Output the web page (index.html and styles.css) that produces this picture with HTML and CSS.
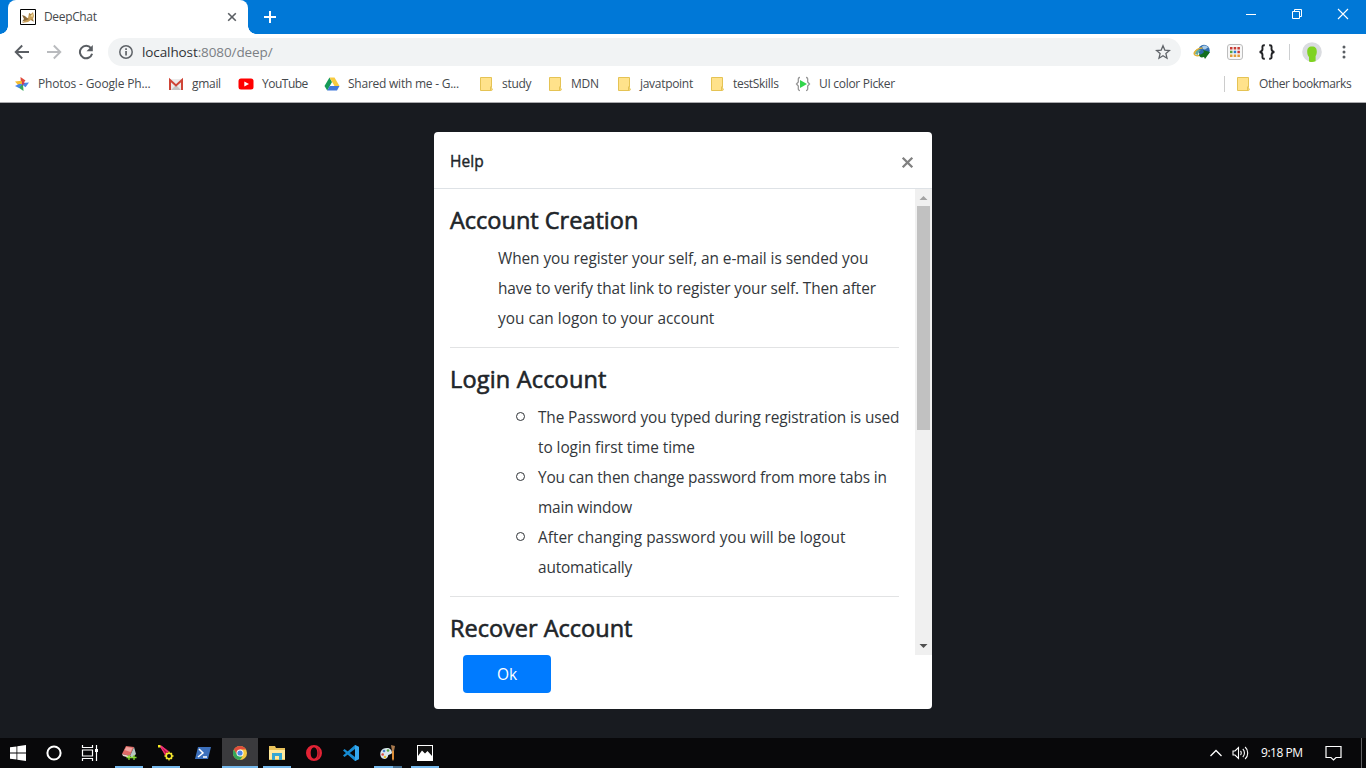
FILE: index.html
```html
<!DOCTYPE html>
<html lang="en">
<head>
<meta charset="utf-8">
<title>DeepChat</title>
<link rel="stylesheet" href="styles.css">
</head>
<body>
<div class="screen">
  <header class="tabstrip">
    <div class="tab">
      <svg class="favicon" width="16" height="16" viewBox="0 0 16 16"><path fill="#fff" stroke="#000" d="M.5.5h15v15H.5z"/><path fill="#c9a05a" d="M9 4l2 1 2-2 1 4-1 3 1 2-3-1-3 2-6 1 3-3-1-3 4 1z"/><path fill="#8a6a3c" d="M2 6l3 1 2 2 2 1-2 1-3 1-2 .5 2-2.500zM9 4l2 2-1 1zM12 10l2 3-3-2z"/><path fill="#f3dfa2" d="M10 7l3-2-.5 3z"/></svg>
      <span class="tab-title">DeepChat</span>
      <svg class="tab-close" width="10" height="10" viewBox="0 0 10 10"><path d="M1.200 1.200l7.600 7.600M8.800 1.200L1.200 8.800" stroke="#5a5e63" stroke-width="1.600"/></svg>
    </div>
    <svg class="new-tab" width="14" height="14" viewBox="0 0 14 14"><path d="M7 1v12M1 7h12" stroke="#fff" stroke-width="2"/></svg>
    <div class="window-controls">
      <svg width="12" height="12" viewBox="0 0 12 12"><path d="M1 6.500h10" stroke="#fff"/></svg>
      <svg width="12" height="12" viewBox="0 0 12 12" fill="none" stroke="#fff"><path d="M1.500 3.500h7v7h-7zM3.500 3.500v-2h7v7h-2"/></svg>
      <svg width="12" height="12" viewBox="0 0 12 12"><path d="M1 1l10 10M11 1L1 11" stroke="#fff" stroke-width="1.100"/></svg>
    </div>
  </header>

  <div class="toolbar">
    <svg width="16" height="16" viewBox="0 0 16 16" fill="none" stroke="#5a5e63" stroke-width="1.900"><path d="M15 8H2.500M8.200 1.500L1.700 8l6.500 6.500"/></svg>
    <svg width="16" height="16" viewBox="0 0 16 16" fill="none" stroke="#b9bbbe" stroke-width="1.900"><path d="M1 8h12.500M7.800 1.500L14.300 8l-6.500 6.500"/></svg>
    <svg width="16" height="16" viewBox="0 0 16 16"><path d="M13 4.200A6.200 6.200 0 1 0 14.100 9.800" fill="none" stroke="#5a5e63" stroke-width="2"/><path d="M14.800 1v6.300H8.500z" fill="#5a5e63"/></svg>
    <div class="address">
      <svg width="16" height="16" viewBox="0 0 16 16"><circle cx="8" cy="8" r="6.200" fill="none" stroke="#5f6368" stroke-width="1.500"/><path d="M7.200 7h1.700v4.500H7.200zM7.200 4.300h1.700v1.600H7.200z" fill="#5f6368"/></svg>
      <span class="url">localhost<span class="url-rest">:8080/deep/</span></span>
      <svg class="star" width="16" height="16" viewBox="0 0 16 16"><path d="M8 1.800l1.800 4.300 4.700.4-3.600 3.100 1.100 4.600L8 11.800l-4 2.400 1.100-4.600L1.500 6.500l4.700-.4z" fill="none" stroke="#5f6368" stroke-width="1.300"/></svg>
    </div>
    <div class="extensions">
      <svg width="18" height="18" viewBox="0 0 18 18"><ellipse cx="6" cy="9.500" rx="5" ry="2.900" transform="rotate(-18 6 9.500)" fill="none" stroke="#dfb23a" stroke-width="1.500"/><circle cx="11" cy="7.500" r="5.700" fill="#2f6cae"/><path d="M9 3.500c2-2 5-1 6 1l-3 2-2-.5z" fill="#a9cbe8"/><path d="M2 11c0-3 3-5 6-4-2 1-3 3-3 5z" fill="#63aaa0"/><path d="M1.500 11c0-4 4-6 8-6" fill="none" stroke="#dfb23a" stroke-width="1.300"/><path d="M6 11c2 1 3 0 5-2l-1-2 7 2-5 7-1-2c-3 1-5 0-5-3z" fill="#14701f"/></svg>
      <svg width="16" height="16" viewBox="0 0 16 16"><rect x=".5" y=".5" width="15" height="15" rx="2.500" fill="#f7f7f7" stroke="#bdbdbd"/><path fill="#c83c35" d="M3 3h2.500v2.500H3zM6.700 3h2.500v2.500H6.700zM10.400 3h2.500v2.500h-2.500zM10.400 6.700h2.500v2.500h-2.500z"/><path fill="#52a13e" d="M3 6.700h2.500v2.500H3z"/><path fill="#2c7ed0" d="M6.700 6.700h2.500v2.500H6.700z"/><path fill="#e29b37" d="M3 10.400h2.500v2.500H3zM6.700 10.400h2.500v2.500H6.700zM10.400 10.400h2.500v2.500h-2.500z"/></svg>
      <svg width="16" height="16" viewBox="0 0 16 16" fill="none" stroke="#202124" stroke-width="1.900"><path d="M5.800 1.200C2.700 1 3.500 3 3.500 5S3 7.500.7 8C3 8.500 3.500 9 3.500 11s-.8 4 2.300 3.800M10.200 1.200C13.300 1 12.500 3 12.500 5s.5 2.500 2.800 3c-2.300.5-2.800 1-2.800 3s.8 4-2.300 3.800"/></svg>
    </div>
    <span class="separator"></span>
    <svg class="avatar" width="20" height="20" viewBox="0 0 20 20"><circle cx="10" cy="10" r="9.800" fill="#dadce0"/><path d="M10 4.500c3.500 0 4.800 2 4.800 5 0 2.500-.5 3.500-1.200 4.500v5.200c-2.200.9-4.500.9-6.600.2V15c-1.200-1-1.800-3-1.800-5.500 0-3 1.300-5 4.800-5z" fill="#7fd321"/></svg>
    <svg class="menu-dots" width="4" height="14" viewBox="0 0 4 14" fill="#5a5e63"><circle cx="2" cy="2" r="1.500"/><circle cx="2" cy="7" r="1.500"/><circle cx="2" cy="12" r="1.500"/></svg>
  </div>

  <nav class="bookmarks">
    <div class="bookmark-list">
      <div class="bookmark"><svg width="16" height="16" viewBox="0 0 16 16"><path fill="#e04a3b" d="M6.500 1l5 3.500-3 3.500H7z"/><path fill="#4a86e8" d="M15 6.500l-3.500 4.800L8 8.500V7z"/><path fill="#36a95c" d="M9.500 15l-5-3.500L8 8h1z"/><path fill="#f5bd30" d="M1 5.500l6.500-.7L8.500 8 4 9z"/><path fill="#4a86e8" d="M1 10l4-2h3.500L5 12z"/><path fill="#c93c63" d="M8 5.500L11 7 8 9.500z"/></svg><span class="b-photos">Photos - Google Ph...</span></div>
      <div class="bookmark"><svg width="16" height="16" viewBox="0 0 16 16"><path fill="#ececec" d="M1 3h14v11H1z"/><path fill="#c5c5c5" d="M3 14l5-5 5 5z"/><path d="M2 14V4l6 5.500L14 4v10" fill="none" stroke="#cf4537" stroke-width="2"/></svg><span>gmail</span></div>
      <div class="bookmark"><svg width="16" height="16" viewBox="0 0 16 16"><rect x=".5" y="2.500" width="15" height="11" rx="2.500" fill="#f00"/><path d="M6.300 5.500L11 8l-4.700 2.500z" fill="#fff"/></svg><span class="b-youtube">YouTube</span></div>
      <div class="bookmark"><svg width="16" height="16" viewBox="0 0 16 16"><path fill="#169b58" d="M5.500 1.500L8 6 3.200 14.500.5 10z"/><path fill="#f8cb40" d="M5.500 1.500h5L15.500 10h-5z"/><path fill="#4178dc" d="M5.700 10h9.800L13 14.500H3.200z"/></svg><span class="b-shared">Shared with me - G...</span></div>
      <div class="bookmark"><svg width="16" height="16" viewBox="0 0 16 16"><path d="M2.500 1.500h11v10l.8 2.500-1 .5H2.500z" fill="#ffe28b" stroke="#e5c354"/><path d="M12.500 10.500v4" stroke="#e5c354"/></svg><span>study</span></div>
      <div class="bookmark"><svg width="16" height="16" viewBox="0 0 16 16"><path d="M2.500 1.500h11v10l.8 2.500-1 .5H2.500z" fill="#ffe28b" stroke="#e5c354"/><path d="M12.500 10.500v4" stroke="#e5c354"/></svg><span>MDN</span></div>
      <div class="bookmark"><svg width="16" height="16" viewBox="0 0 16 16"><path d="M2.500 1.500h11v10l.8 2.500-1 .5H2.500z" fill="#ffe28b" stroke="#e5c354"/><path d="M12.500 10.500v4" stroke="#e5c354"/></svg><span>javatpoint</span></div>
      <div class="bookmark"><svg width="16" height="16" viewBox="0 0 16 16"><path d="M2.500 1.500h11v10l.8 2.500-1 .5H2.500z" fill="#ffe28b" stroke="#e5c354"/><path d="M12.500 10.500v4" stroke="#e5c354"/></svg><span>testSkills</span></div>
      <div class="bookmark"><svg width="16" height="16" viewBox="0 0 16 16"><path d="M5 1.500C2.500 1.500 3.500 4 3.300 6L1.500 8l1.800 2c.2 2-.8 4.500 1.700 4.500M11 1.500c2.500 0 1.500 2.500 1.700 4.500l1.800 2-1.800 2c-.2 2 .8 4.500-1.700 4.500" fill="none" stroke="#969696" stroke-width="1.300"/><path d="M5 4L12 8 5 12z" fill="#32d54b"/></svg><span>UI color Picker</span></div>
    </div>
    <div class="bookmark other"><svg width="16" height="16" viewBox="0 0 16 16"><path d="M2.500 1.500h11v10l.8 2.500-1 .5H2.500z" fill="#ffe28b" stroke="#e5c354"/><path d="M12.500 10.500v4" stroke="#e5c354"/></svg><span>Other bookmarks</span></div>
  </nav>

  <main class="page">
    <section class="modal">
      <div class="modal-header">
        <h5 class="modal-title">Help</h5>
        <svg class="modal-close" width="13" height="13" viewBox="0 0 13 13"><path d="M1.700 1.700l9.600 9.600M11.300 1.700l-9.600 9.600" stroke="#808080" stroke-width="2.300"/></svg>
      </div>
      <div class="modal-scroll">
        <div class="modal-body">
          <h4 class="topic">Account Creation</h4>
          <p class="copy"><span class="snug">When you register your self, an e-mail is sended you</span><br><span class="tight">have to verify that link to register your self. Then after</span><br><span>you can logon to your account</span></p>
          <hr class="rule">
          <h4 class="topic topic-login">Login Account</h4>
          <ul class="steps">
            <li><span class="tight">The Password you typed during registration is used</span><br><span class="snug">to login first time time</span></li>
            <li><span class="tighter">You can then change password from more tabs in</span><br><span class="tighter">main window</span></li>
            <li><span>After changing password you will be logout</span><br><span class="tighter">automatically</span></li>
          </ul>
          <hr class="rule">
          <h4 class="topic">Recover Account</h4>
        </div>
        <div class="scrollbar">
          <svg width="17" height="17" viewBox="0 0 17 17"><path d="M4.500 11L8.500 7l4 4z" fill="#a3a3a3"/></svg>
          <div class="thumb"></div>
          <svg class="down" width="17" height="17" viewBox="0 0 17 17"><path d="M4.500 6h8l-4 4z" fill="#505050"/></svg>
        </div>
      </div>
      <div class="modal-footer"><button class="ok">Ok</button></div>
    </section>
  </main>

  <footer class="taskbar">
    <div class="system-buttons">
      <div class="task"><svg width="16" height="16" viewBox="0 0 16 16" fill="#fff"><path d="M0 2.300l6.500-.9v6.200H0zM7.300 1.300L16 0v7.600H7.300zM0 8.400h6.500v6.200L0 13.700zM7.300 8.400H16V16l-8.700-1.300z"/></svg></div>
      <div class="task"><svg width="16" height="16" viewBox="0 0 16 16"><circle cx="8" cy="8" r="6.600" fill="none" stroke="#fff" stroke-width="2"/></svg></div>
      <div class="task"><svg width="18" height="16" viewBox="0 0 18 16" fill="none" stroke="#fff" stroke-width="1.200"><path d="M1.500 0v2.500h10V0M1.500 5h10v6h-10zM1.500 16v-2.500h10V16M15.500 0v16"/><path d="M14 4h3v3h-3z" fill="#fff" stroke="none"/></svg></div>
    </div>
    <div class="apps">
      <div class="task open"><svg width="18" height="18" viewBox="0 0 18 18"><path d="M6 2l8 1-4 9-8-2z" fill="#e06a66"/><path d="M6.500 3l6 1-2 4-6-2z" fill="#f0a49e"/><path d="M14 3l2 7-4 4-2-2z" fill="#b8c6c4"/><path d="M2 10l8 2v2l-7-2z" fill="#f0d7d1"/><path d="M9 11v5M6.500 13.500h5M14 11v5M11.500 13.500h5" stroke="#8adb35" stroke-width="1.300"/></svg></div>
      <div class="task open"><svg width="18" height="18" viewBox="0 0 18 18"><path d="M3 1l9 6-4 5z" fill="#b5123b"/><path d="M3 2l6 9M4 2l7 6" stroke="#f0327a" stroke-width="1.300"/><path d="M1 1h2.500v2.500H1z" fill="#f8eb22"/><circle cx="12" cy="12" r="2.800" fill="none" stroke="#f5e72f" stroke-width="1.600"/><path d="M12 7.500v2M12 14.500v2M7.500 12h2M14.500 12h2M9 9l1 1M14 14l1 1M9 15l1-1M14 10l1-1" stroke="#f5e72f" stroke-width="1.300"/></svg></div>
      <div class="task"><svg width="18" height="16" viewBox="0 0 18 16"><path d="M4 2h13l-3 12H1z" fill="#3c70bd"/><path d="M5 4l4 4-5 4M9 12h4" fill="none" stroke="#fff" stroke-width="1.500"/></svg></div>
      <div class="task open active"><svg width="16" height="16" viewBox="0 0 16 16"><circle cx="8" cy="8" r="7" fill="#f6ca42"/><path d="M1.900 4.500A7 7 0 0 1 14.100 4.500H8L5 9.700z" fill="#df4c3c"/><path d="M1.900 4.500L5 9.700 8 11.500h2.500L8 15A7 7 0 0 1 1.900 4.500z" fill="#35a65a"/><circle cx="8" cy="8" r="3.500" fill="#fff"/><circle cx="8" cy="8" r="2.600" fill="#4b86e5"/></svg></div>
      <div class="task open"><svg width="18" height="16" viewBox="0 0 18 16"><path d="M1 1h6l1 2h9v12H1z" fill="#e8c25b"/><path d="M1 5h16v9H1z" fill="#ffe99c"/><path d="M4 15V8h10v7h-3v-4H7v4z" fill="#35a7d2"/></svg></div>
      <div class="task"><svg width="16" height="16" viewBox="0 0 16 16"><path fill-rule="evenodd" d="M8 0a8 8 0 1 0 0 16A8 8 0 0 0 8 0zm0 2.500c2.300 0 3.300 2.500 3.300 5.500S10.300 13.500 8 13.500 4.700 11 4.700 8 5.700 2.500 8 2.500z" fill="#e32335"/><path d="M11 2c4 3 4 9 0 12 1.500-4 1.500-8 0-12z" fill="#b31a2d"/></svg></div>
      <div class="task"><svg width="16" height="16" viewBox="0 0 16 16"><path d="M12 0l4 2v12l-4 2L0 5.500 1.500 4 12 12V4L1.500 12 0 10.500z" fill="#168bd2"/><path d="M12 0l4 2v12l-4 2z" fill="#36a8ee"/></svg></div>
      <div class="task open stacked"><svg width="18" height="18" viewBox="0 0 18 18"><path d="M8 4C2 4 0 9 2 13c3 4 7 1 7-1 0-2 3-1 4-3 0-3-2-5-5-5z" fill="#d9e7ec"/><circle cx="5" cy="7" r="1.300" fill="#4a83cb"/><circle cx="9" cy="6.500" r="1.300" fill="#54a844"/><circle cx="3.700" cy="10.500" r="1.300" fill="#db4c42"/><circle cx="6" cy="13" r="1.300" fill="#e7bf35"/><path d="M12 1l4 1-1 5h-2z" fill="#a9794d"/><path d="M13 7h2v8l-1 2-1-2z" fill="#dc8d38"/></svg></div>
      <div class="task open"><svg width="16" height="16" viewBox="0 0 16 16"><path d="M0 0h16v16H0z" fill="#fff"/><path d="M1 11L5 5.500l3 3L10.500 6 15 11V1H1z" fill="#111"/></svg></div>
    </div>
    <div class="tray">
      <svg width="12" height="8" viewBox="0 0 12 8"><path d="M.5 7L6 1.500 11.500 7" fill="none" stroke="#fff" stroke-width="1.300"/></svg>
      <svg class="volume" width="17" height="14" viewBox="0 0 17 14" fill="none" stroke="#fff" stroke-width="1.100"><path d="M1 5h2l3.500-3.500v11L3 9H1zM8.500 5c1 1 1 3 0 4M10.800 3c2.200 2 2.200 6 0 8M13.100 1c3.500 3 3.500 9 0 12"/></svg>
      <span class="clock">9:18 PM</span>
      <svg class="notice" width="17" height="17" viewBox="0 0 17 17"><path d="M1 1.500h15v11h-5L8.500 15 6 12.500H1z" fill="none" stroke="#fff" stroke-width="1.200"/></svg>
      <span class="show-desktop"></span>
    </div>
  </footer>
</div>
</body>
</html>
```
FILE: styles.css
```css
*, *::before, *::after { box-sizing: border-box; }
body { margin: 0; font-family: "Open Sans", "Noto Sans", sans-serif; }
svg { display: block; flex: none; }
.screen { width: 1366px; height: 768px; display: flex; flex-direction: column; overflow: hidden; background: #181b20; }

.tabstrip { height: 34px; background: #0078d7; display: flex; padding-left: 8px; }
.tab { position: relative; width: 240px; height: 34px; background: #fff; border-radius: 8px 8px 0 0; display: flex; align-items: center; padding: 0 11px 0 12px; }
.tab::before, .tab::after { content: ""; position: absolute; bottom: 0; width: 8px; height: 8px; }
.tab::before { left: -8px; background: radial-gradient(circle at 0 0, transparent 7.5px, #fff 8px); }
.tab::after { right: -8px; background: radial-gradient(circle at 100% 0, transparent 7.5px, #fff 8px); }
.tab-title { margin-left: 8px; padding-bottom: 1px; font-size: 12px; letter-spacing: -.35px; color: #45494d; }
.tab-close { margin-left: auto; }
.new-tab { margin: 10px 0 0 15px; }
.window-controls { margin: 8px 17px 0 auto; display: flex; gap: 34px; }

.toolbar { height: 36px; background: #fff; display: flex; align-items: center; padding: 0 19px 0 14px; gap: 16px; }
.address { width: 1073px; flex: none; height: 28px; margin-left: -2px; border-radius: 14px; background: #f1f3f4; display: flex; align-items: center; padding: 0 10px; }
.url { margin-left: 8px; font-size: 13.5px; letter-spacing: -.1px; color: #303236; }
.url-rest { color: #7b7f84; }
.star { margin-left: auto; }
.extensions { display: flex; align-items: center; gap: 16px; margin-left: -4px; }
.separator { width: 1px; height: 16px; background: #cdcfd1; margin-left: -2px; }
.avatar { margin-left: -4px; }
.menu-dots { margin-left: 4px; }

.bookmarks { height: 33px; background: #fff; border-bottom: 1px solid #aaaaad; display: flex; justify-content: space-between; padding: 0 0 4px 14px; }
.bookmark-list { display: grid; grid-template-columns: 154px 70px 86px 154px 69px 69px 93px 86px 110px; }
.bookmark { display: flex; align-items: center; gap: 8px; font-size: 12px; letter-spacing: -.3px; color: #45494d; white-space: nowrap; }
.bookmark span { padding-bottom: 1px; }
.b-photos { letter-spacing: -.15px; }
.b-shared { letter-spacing: -.24px; }
.b-youtube { letter-spacing: -.5px; }
.other { width: 142px; margin: 6px 0 7px; height: 16px; border-left: 1px solid #ccc; padding-left: 10px; letter-spacing: -.42px; }

.page { height: 635px; background: #181b20; display: flex; justify-content: center; align-items: flex-start; padding-top: 29px; }
.modal { width: 498px; height: 577px; background: #fff; border-radius: 4px; overflow: hidden; color: #212529; }
.modal-header { height: 57px; border-bottom: 1px solid #dee2e6; display: flex; justify-content: space-between; padding: 16px 18px 0 16px; }
.modal-title { margin: 0; padding-top: 1px; font-size: 15.5px; line-height: 24px; font-weight: 400; letter-spacing: .1px; -webkit-text-stroke: .4px #212529; }
.modal-close { margin-top: 8px; }
.modal-scroll { height: 466px; display: flex; overflow: hidden; }
.modal-body { width: 481px; padding: 16px; }
.topic { margin: 0 0 8px; padding-top: 1px; font-size: 23.5px; line-height: 29px; font-weight: 400; letter-spacing: 0; white-space: nowrap; -webkit-text-stroke: .6px #212529; }
.topic-login { letter-spacing: .18px; }
.copy, .steps { margin: 0; font-size: 15.4px; line-height: 30px; white-space: nowrap; color: #33373b; }
.copy { padding: 1px 0 0 48px; height: 90px; }
.steps { padding: 1px 0 0 88px; height: 180px; list-style: none; }
.steps li::before { content: ""; display: inline-block; width: 9px; height: 9px; margin: 0 13px 0 -22px; border: 1px solid #303438; border-radius: 50%; vertical-align: 2px; }
.snug { letter-spacing: -.06px; }
.tight { letter-spacing: -.11px; }
.tighter { letter-spacing: -.17px; }
.rule { margin: 14px 0 16px; height: 1px; border: 0; background: #e2e3e4; }
.scrollbar { width: 17px; background: #f0f0f0; display: flex; flex-direction: column; }
.thumb { width: 13px; height: 224px; margin-left: 2px; background: #c1c1c1; }
.down { margin-top: auto; }
.modal-footer { padding-left: 29px; }
.ok { display: block; width: 88px; height: 38px; border: 0; border-radius: 4px; background: #007bff; color: #fff; font: 15.5px "Open Sans", sans-serif; padding: 0; }

.taskbar { height: 30px; background: #08080a; display: flex; }
.system-buttons { display: flex; }
.task { width: 36px; height: 30px; display: flex; align-items: center; justify-content: center; }
.apps { display: flex; margin-left: 3px; gap: 1px; }
.open { background: linear-gradient(#76b9ed, #76b9ed) center bottom / 28px 2px no-repeat; }
.active { background: linear-gradient(#76b9ed, #76b9ed) center bottom / 36px 2px no-repeat, #3a3a3d; }
.stacked { background: linear-gradient(90deg, #76b9ed 19px, #456f91 19px) center bottom / 28px 2px no-repeat; }
.tray { margin-left: auto; display: flex; align-items: center; }
.volume { margin-left: 10px; }
.clock { width: 44px; margin-left: 12px; padding-bottom: 1px; color: #fff; font-size: 12px; letter-spacing: -.45px; white-space: nowrap; }
.notice { margin-left: 20px; }
.show-desktop { width: 5px; height: 30px; border-left: 1px solid #606063; margin-left: 19px; }
```
